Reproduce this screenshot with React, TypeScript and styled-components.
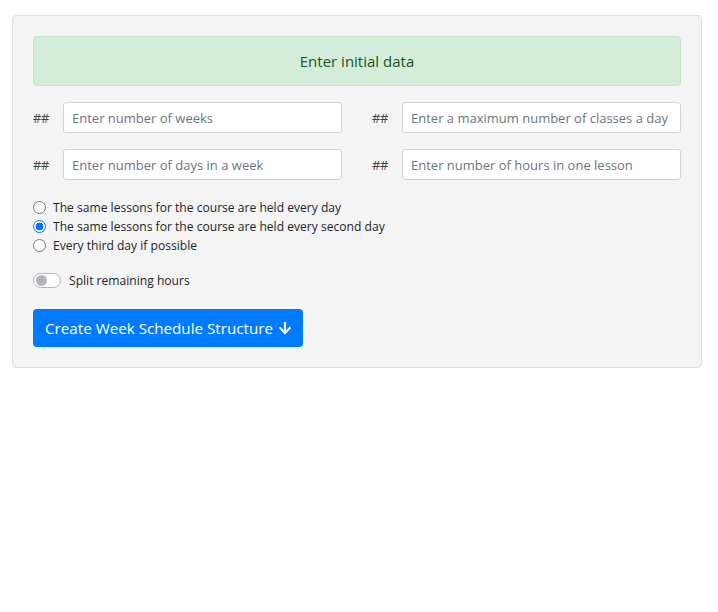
import React from "react";
import styled, { createGlobalStyle } from "styled-components";
import { FaArrowDown } from "react-icons/fa";

const GlobalStyle = createGlobalStyle`
  html, body { margin: 0; padding: 0; background: #ffffff; }
  body { font-family: "Open Sans", "Noto Sans", sans-serif; color: #212529; }
  * { box-sizing: border-box; }
`;

const Page = styled.div`
  padding: 15px 16px 0 12px;
`;

const Card = styled.div`
  width: 690px;
  background: #f4f4f4;
  border: 1px solid #dfdfdf;
  border-radius: 4px;
  padding: 20px 20px 20px 20px;
  display: flex;
  flex-direction: column;
`;

const Alert = styled.div`
  height: 50px;
  background: #d4edda;
  border: 1px solid #c3e6cb;
  border-radius: 4px;
  color: #155724;
  display: flex;
  align-items: center;
  justify-content: center;
  font-size: 15px;
`;

const FieldGrid = styled.div`
  display: grid;
  grid-template-columns: 1fr 1fr;
  column-gap: 30px;
  row-gap: 16px;
  margin-top: 16px;
`;

const Field = styled.div`
  display: flex;
  align-items: center;
`;

const Hash = styled.span`
  width: 30px;
  flex: none;
  font-size: 13px;
  color: #444;
  letter-spacing: -0.5px;
`;

const Input = styled.input`
  flex: 1;
  min-width: 0;
  height: 31px;
  border: 1px solid #ced4da;
  border-radius: 3px;
  background: #fff;
  padding: 0 8px;
  font-family: inherit;
  font-size: 13px;
  color: #495057;
  &::placeholder { color: #6c757d; }
  outline: none;
`;

const RadioGroup = styled.div`
  display: flex;
  flex-direction: column;
  margin-top: 18px;
`;

const RadioRow = styled.label`
  display: flex;
  align-items: center;
  height: 19px;
  font-size: 12.1px;
  color: #212529;
`;

const Radio = styled.span<{ $checked?: boolean }>`
  width: 13px;
  height: 13px;
  border-radius: 50%;
  flex: none;
  margin-right: 7px;
  border: ${(p) => (p.$checked ? "1px solid #0075ff" : "1px solid #767676")};
  background: ${(p) => (p.$checked ? "radial-gradient(circle, #0075ff 0 3.6px, #fff 4.2px)" : "#fff")};
`;

const SwitchRow = styled.label`
  display: flex;
  align-items: center;
  margin-top: 17px;
  font-size: 12.1px;
  color: #212529;
`;

const Switch = styled.span`
  width: 28px;
  height: 15px;
  border: 1px solid #adb5bd;
  border-radius: 8px;
  background: #fff;
  display: flex;
  align-items: center;
  padding-left: 2px;
  margin-right: 8px;
  &::before {
    content: "";
    width: 11px;
    height: 11px;
    border-radius: 50%;
    background: #adb5bd;
  }
`;

const Button = styled.button`
  align-self: flex-start;
  margin-top: 20px;
  height: 38px;
  width: 270px;
  background: #007bff;
  color: #fff;
  border: none;
  border-radius: 4px;
  font-family: inherit;
  font-size: 15.2px;
  white-space: nowrap;
  display: flex;
  align-items: center;
  padding: 0 0 0 12px;
  gap: 5px;
  svg { width: 14px; height: 14px; flex: none; }
`;

const fields = [
  "Enter number of weeks",
  "Enter a maximum number of classes a day",
  "Enter number of days in a week",
  "Enter number of hours in one lesson",
];

const options = [
  { label: "The same lessons for the course are held every day", checked: false },
  { label: "The same lessons for the course are held every second day", checked: true },
  { label: "Every third day if possible", checked: false },
];

export default function App() {
  return (
    <>
      <GlobalStyle />
      <Page>
        <Card>
          <Alert>Enter initial data</Alert>
          <FieldGrid>
            {fields.map((f) => (
              <Field key={f}>
                <Hash>##</Hash>
                <Input placeholder={f} />
              </Field>
            ))}
          </FieldGrid>
          <RadioGroup>
            {options.map((o) => (
              <RadioRow key={o.label}>
                <Radio $checked={o.checked} />
                {o.label}
              </RadioRow>
            ))}
          </RadioGroup>
          <SwitchRow>
            <Switch />
            Split remaining hours
          </SwitchRow>
          <Button>
            Create Week Schedule Structure <FaArrowDown />
          </Button>
        </Card>
      </Page>
    </>
  );
}
